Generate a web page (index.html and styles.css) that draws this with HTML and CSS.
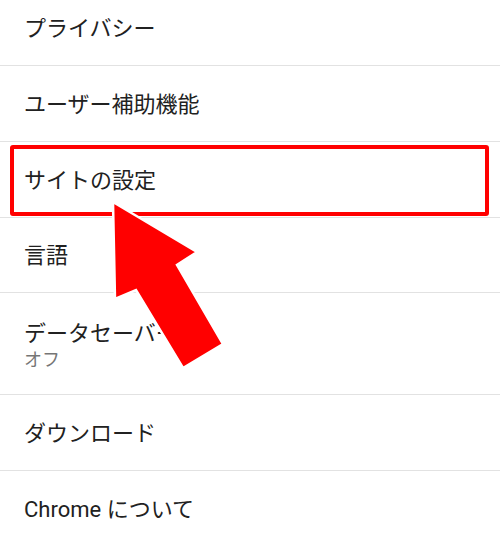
FILE: index.html
```html
<!DOCTYPE html>
<html lang="ja">
<head>
<meta charset="utf-8">
<link rel="stylesheet" href="styles.css">
</head>
<body>
<div class="screen">
  <ul class="list">
    <li class="row"><span class="title">プライバシー</span></li>
    <li class="row"><span class="title">ユーザー補助機能</span></li>
    <li class="row"><span class="title">サイトの設定</span></li>
    <li class="row"><span class="title">言語</span></li>
    <li class="row row-tall"><span class="title">データセーバー</span><span class="sub">オフ</span></li>
    <li class="row"><span class="title">ダウンロード</span></li>
    <li class="row"><span class="title">Chrome について</span></li>
  </ul>
  <div class="highlight"></div>
  <svg class="arrow" width="500" height="546" viewBox="0 0 500 546">
    <polygon points="113,202 197,252 177,265 223,344 183,368 136,290 115,299" fill="#ff0000" stroke="#ffffff" stroke-width="2.5" stroke-linejoin="miter"/>
  </svg>
</div>
</body>
</html>
```

FILE: styles.css
```css
html, body {
  margin: 0;
  padding: 0;
  background: #ffffff;
}
.screen {
  position: relative;
  width: 500px;
  height: 546px;
  overflow: hidden;
  font-family: Roboto, "Noto Sans CJK JP", sans-serif;
}
.list {
  list-style: none;
  margin: -9.8px 0 0 0;
  padding: 0;
}
.row {
  display: flex;
  flex-direction: column;
  justify-content: center;
  box-sizing: border-box;
  height: 75.8px;
  padding: 3px 24px 0;
  border-bottom: 1.5px solid #e2e2e2;
}
.row-tall {
  height: 101.6px;
  padding-top: 4px;
}
.title {
  font-size: 22px;
  line-height: 28px;
  color: #212121;
}
.sub {
  font-size: 18px;
  line-height: 24px;
  color: #757575;
}
.highlight {
  position: absolute;
  left: 10px;
  top: 145px;
  width: 479px;
  height: 71px;
  box-sizing: border-box;
  border: 4.5px solid #ff0000;
  border-radius: 3px;
}
.arrow {
  position: absolute;
  left: 0;
  top: 0;
}
```
